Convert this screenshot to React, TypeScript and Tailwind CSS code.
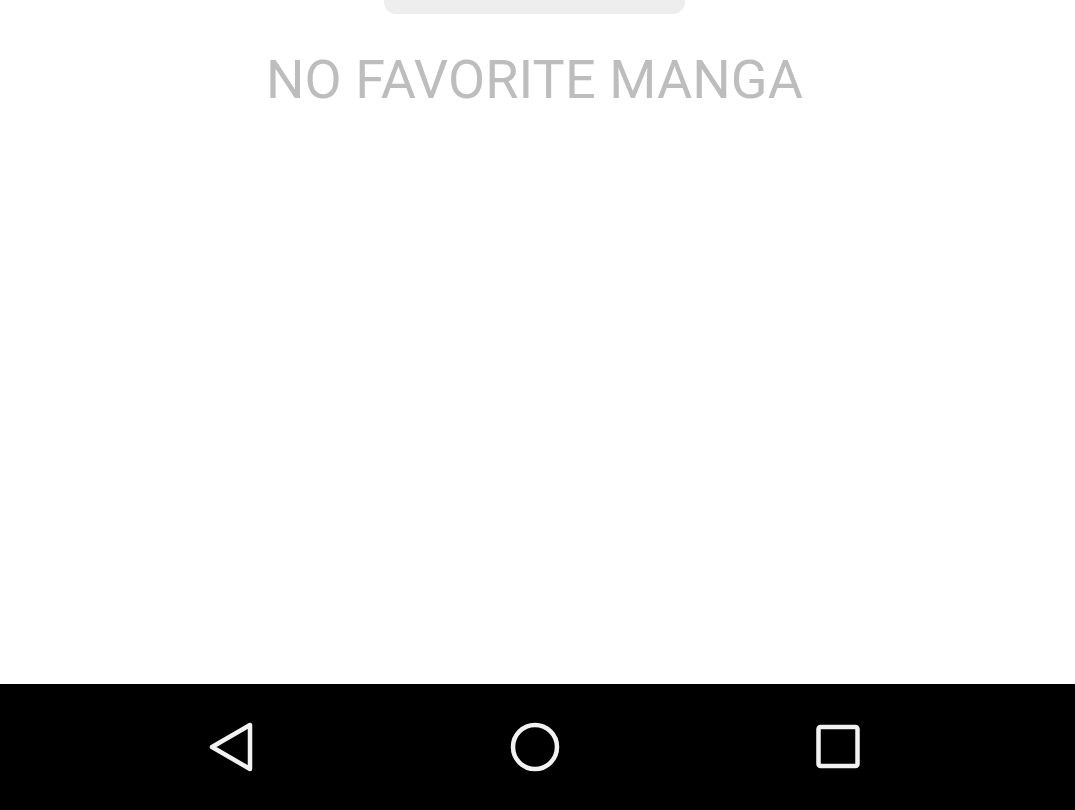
import React from 'react';

const NavBar = () => (
  <div className="h-[126px] bg-black flex items-center justify-center gap-[243px] pr-[5px]">
    {/* back */}
    <svg width="60" height="60" viewBox="0 0 60 60" fill="none">
      <path d="M10 30 L48 8 L48 52 Z" stroke="#f2f2f2" strokeWidth="4.5" strokeLinejoin="round" />
    </svg>
    {/* home */}
    <svg width="60" height="60" viewBox="0 0 60 60" fill="none">
      <circle cx="30" cy="30" r="22" stroke="#f2f2f2" strokeWidth="4.5" />
    </svg>
    {/* recents */}
    <svg width="60" height="60" viewBox="0 0 60 60" fill="none">
      <rect x="10.5" y="10" width="39" height="39" rx="2" stroke="#f2f2f2" strokeWidth="4.5" />
    </svg>
  </div>
);

export default function App() {
  return (
    <div className="w-[1075px] h-[810px] flex flex-col bg-white font-['Roboto',sans-serif]">
      <main className="flex-1 flex flex-col items-center">
        <div className="w-[301px] h-[14px] bg-[#eeeeee] rounded-b-[12px] -ml-[6px]" />
        <p className="mt-[39px] text-[54px] leading-none text-[#bdbdbd] tracking-[0.1px] -ml-[6px]">
          NO FAVORITE MANGA
        </p>
      </main>
      <NavBar />
    </div>
  );
}
